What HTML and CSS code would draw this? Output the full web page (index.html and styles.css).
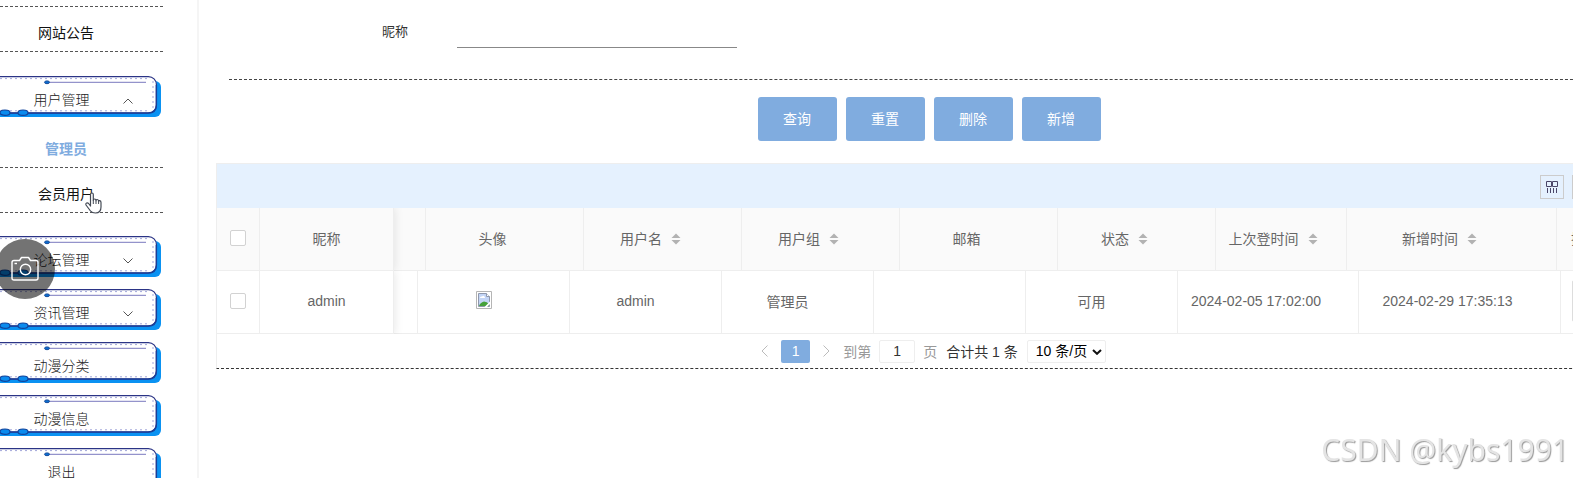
FILE: index.html
```html
<!DOCTYPE html>
<html lang="zh-CN">
<head>
  <meta charset="UTF-8">
  <meta name="viewport" content="width=device-width, initial-scale=1.0">
  <title>管理员</title>
  <link rel="stylesheet" href="styles.css">
</head>
<body>
  <svg class="defs" aria-hidden="true">
    <symbol id="frame" viewBox="0 0 161 41">
      <rect x="-12" y="5" width="173" height="36" rx="6" fill="#0a92f2"/>
      <rect x="-12" y="0.6" width="168.4" height="36.4" rx="8" fill="#fff" stroke="#2b3486" stroke-width="1.2"/>
      <path d="M0 37H148Q156.400 37 156.400 29V9" fill="none" stroke="#1c3e96" stroke-width="1.4"/>
      <path d="M0 2.600H148M0 34.800H150M153 5V33" fill="none" stroke="#a3a7da" stroke-width="1" stroke-dasharray="2 3"/>
      <path d="M47 6.300H146" stroke="#9493cb" stroke-width="1.2"/>
      <ellipse cx="47" cy="6.300" rx="2.500" ry="1.400" fill="#0a6fd0" stroke="#174b9c"/>
      <ellipse cx="5" cy="36.700" rx="5" ry="2.700" fill="#0a8bee" stroke="#11449c" stroke-width="1.2"/>
      <ellipse cx="23" cy="36.700" rx="5" ry="2.700" fill="#0a8bee" stroke="#11449c" stroke-width="1.2"/>
    </symbol>
    <symbol id="down" viewBox="0 0 10 6"><path d="M0.500 0.500L5 5L9.500 0.500" fill="none" stroke="#555"/></symbol>
    <symbol id="up" viewBox="0 0 10 6"><path d="M0.500 5.500L5 1L9.500 5.500" fill="none" stroke="#555"/></symbol>
    <symbol id="sort" viewBox="0 0 10 12"><path d="M5 0.500L9.500 5H0.500ZM5 11.500L9.500 7H0.500Z" fill="#b2b2b2"/></symbol>
  </svg>

  <nav class="sidebar">
    <ul class="submenu first">
      <li><a href="#">网站公告</a></li>
    </ul>
    <a class="menu" href="#"><svg class="frame"><use href="#frame"/></svg><span>用户管理</span><svg class="arrow"><use href="#up"/></svg></a>
    <ul class="submenu">
      <li class="active"><a href="#">管理员</a></li>
      <li><a href="#">会员用户</a></li>
    </ul>
    <a class="menu" href="#"><svg class="frame"><use href="#frame"/></svg><span>论坛管理</span><svg class="arrow"><use href="#down"/></svg></a>
    <a class="menu" href="#"><svg class="frame"><use href="#frame"/></svg><span>资讯管理</span><svg class="arrow"><use href="#down"/></svg></a>
    <a class="menu" href="#"><svg class="frame"><use href="#frame"/></svg><span>动漫分类</span></a>
    <a class="menu" href="#"><svg class="frame"><use href="#frame"/></svg><span>动漫信息</span></a>
    <a class="menu" href="#"><svg class="frame"><use href="#frame"/></svg><span>退出</span></a>
  </nav>

  <main class="main">
    <form class="search">
      <div class="field">
        <label for="nickname">昵称</label>
        <input type="text" id="nickname">
      </div>
    </form>
    <div class="buttons">
      <button type="button">查询</button>
      <button type="button">重置</button>
      <button type="button">删除</button>
      <button type="button">新增</button>
    </div>

    <section class="table-box">
      <div class="toolbar">
        <button type="button" class="tool" aria-label="筛选列">
          <svg width="12" height="12" viewBox="0 0 12 12" fill="none" stroke="#4b4668"><path d="M0.500 0.500H5.500V5.500H0.500ZM6.500 0.500H11.500V5.500H6.500ZM1.500 7V12M4.500 7V12M7.500 7V12M10.500 7V12"/></svg>
        </button>
        <button type="button" class="tool" aria-label="导出"></button>
        <button type="button" class="tool" aria-label="打印"></button>
      </div>

      <table class="head">
        <colgroup>
          <col class="c-check"><col class="c-fixed"><col class="h-gap"><col class="h-col"><col class="h-col"><col class="h-col"><col class="h-col"><col class="h-col"><col class="h-login"><col class="h-add"><col>
        </colgroup>
        <thead>
          <tr>
            <th class="check"><input type="checkbox" aria-label="全选"></th>
            <th class="fixed">昵称</th>
            <th></th>
            <th>头像</th>
            <th>用户名<svg class="sort"><use href="#sort"/></svg></th>
            <th>用户组<svg class="sort"><use href="#sort"/></svg></th>
            <th>邮箱</th>
            <th>状态<svg class="sort"><use href="#sort"/></svg></th>
            <th class="login">上次登时间<svg class="sort"><use href="#sort"/></svg></th>
            <th>新增时间<svg class="sort"><use href="#sort"/></svg></th>
            <th class="action">操作</th>
          </tr>
        </thead>
      </table>
      <table class="rows">
        <colgroup>
          <col class="c-check"><col class="c-fixed"><col class="b-gap"><col class="b-col"><col class="b-col"><col class="b-col"><col class="b-col"><col class="b-col"><col class="b-login"><col class="b-add"><col>
        </colgroup>
        <tbody>
          <tr>
            <td class="check"><input type="checkbox" aria-label="选择 admin"></td>
            <td class="fixed">admin</td>
            <td></td>
            <td>
              <svg class="avatar" width="16" height="18" viewBox="0 0 16 18" role="img" aria-label="头像">
                <path d="M0.500 0.500H15.500V17.500H0.500Z" fill="#fff" stroke="#b5b5b5"/>
                <path d="M2.500 2.500H10.500L13.500 5.500V15.500H2.500Z" fill="#c3d5f6" stroke="#8f98ad"/>
                <path d="M4 7Q4 5 6 5.500Q8 3.500 9 6.500V7Z" fill="#fff"/>
                <path d="M3 15Q4 11.500 8 10.500Q11 10.500 13 13V15Z" fill="#45a13a"/>
                <path d="M8.500 16L14 10.500V13L11 16Z" fill="#fff"/>
                <path d="M10.500 2.500V5.500H13.500" fill="#fff" stroke="#8f98ad"/>
              </svg>
            </td>
            <td>admin</td>
            <td>管理员</td>
            <td></td>
            <td>可用</td>
            <td class="time">2024-02-05 17:02:00</td>
            <td class="time">2024-02-29 17:35:13</td>
            <td class="action"><button type="button" aria-label="详情"></button></td>
          </tr>
        </tbody>
      </table>

      <div class="pager">
        <button type="button" class="step" aria-label="上一页"><svg width="7" height="12" viewBox="0 0 7 12"><path d="M6.500 0.500L1 6L6.500 11.500" fill="none" stroke="#bbb"/></svg></button>
        <button type="button" class="current">1</button>
        <button type="button" class="step" aria-label="下一页"><svg width="7" height="12" viewBox="0 0 7 12"><path d="M0.500 0.500L6 6L0.500 11.500" fill="none" stroke="#bbb"/></svg></button>
        <label class="muted" for="page">到第</label>
        <input type="text" id="page" value="1">
        <span class="muted">页</span>
        <span class="total">合计共 1 条</span>
        <span class="limit">
          <select aria-label="每页条数"><option>10 条/页</option><option>20 条/页</option></select>
          <svg width="10" height="6" viewBox="0 0 10 6"><path d="M1 1L5 4.800L9 1" fill="none" stroke="#111" stroke-width="2"/></svg>
        </span>
      </div>
    </section>
  </main>

  <button type="button" class="camera" aria-label="截图">
    <svg width="28" height="26" viewBox="0 0 28 26" fill="none" stroke="#fff" stroke-width="1.4" stroke-linejoin="round"><path d="M3 4.500H8.500L10.500 1.500H17.500L19.500 4.500H25Q27 4.500 27 6.500V22Q27 24 25 24H3Q1 24 1 22V6.500Q1 4.500 3 4.500Z"/><circle cx="14.500" cy="13.500" r="5.200"/><path d="M3.500 7.500H6"/></svg>
  </button>
  <svg class="pointer" width="17" height="22" viewBox="0 0 17 22" aria-hidden="true"><path d="M5.500 14V2.500Q5.500 1 6.900 1Q8.300 1 8.300 2.500V8.500Q8.300 7 9.600 7Q11 7 11 8.700Q11 7.500 12.300 7.500Q13.600 7.500 13.600 9.500Q13.800 8.500 14.800 8.700Q16 9 16 10.500V15Q16 21 10.500 21Q7 21 5.500 19L1 13Q0.500 11.500 1.600 11Q2.800 10.500 4 12Z" fill="#fff" stroke="#444a55" stroke-width="1.200" stroke-linejoin="round"/><path d="M8.300 8.500V12M11 8.700V12M13.600 9.500V12" stroke="#444a55" fill="none"/></svg>
  <div class="watermark">CSDN @kybs1991</div>
</body>
</html>
```

FILE: styles.css
```css
* {
  box-sizing: border-box;
}
body {
  margin: 0;
  height: 100vh;
  overflow: hidden;
  display: flex;
  background: #fff;
  color: #333;
  font-family: "Liberation Sans", "Noto Sans CJK SC", sans-serif;
  font-size: 14px;
}
button,
input,
select {
  font: inherit;
  margin: 0;
}
a {
  color: inherit;
  text-decoration: none;
}
.defs {
  position: absolute;
  width: 0;
  height: 0;
}

/* sidebar */
.sidebar {
  flex: 0 0 199px;
  padding-top: 6px;
  border-right: 2px solid #f5f5f5;
}
.submenu {
  list-style: none;
  width: 163px;
  margin: 0 0 24px;
  padding: 0;
}
.submenu.first {
  border-top: 1px dashed #555;
}
.submenu li {
  height: 45px;
  padding: 8px 31px 0 0;
  border-bottom: 1px dashed #555;
  text-align: center;
  line-height: 36px;
  color: #111;
}
.submenu a {
  display: block;
}
.submenu .active {
  color: #80acdf;
  font-weight: bold;
}
.menu {
  position: relative;
  display: block;
  width: 161px;
  height: 41px;
  margin-bottom: 12px;
  padding: 8px 38px 0 0;
  line-height: 32px;
  text-align: center;
  font-weight: 300;
  color: #222;
}
.menu + .submenu {
  margin: -6px 0 23px;
}
.menu span {
  position: relative;
}
.frame {
  position: absolute;
  left: 0;
  top: 0;
  width: 161px;
  height: 41px;
}
.arrow {
  position: absolute;
  right: 28px;
  top: 22px;
  width: 10px;
  height: 6px;
}

/* content runs past the right edge of the window */
.main {
  flex: 1 0 0;
  min-width: 0;
  margin-right: -69px;
  padding: 12px 0 0 17px;
}
.search {
  margin: 0 14px 0 13px;
  padding: 0 0 31px 153px;
  border-bottom: 1px dashed #444;
}
.field {
  display: flex;
  align-items: center;
}
.field label {
  width: 75px;
  font-size: 13px;
}
.field input {
  width: 280px;
  height: 36px;
  padding: 0 8px;
  border: 0;
  border-bottom: 1px solid #888;
  background: none;
  outline: none;
}
.buttons {
  display: flex;
  justify-content: center;
  gap: 9px;
  padding: 17px 0 22px;
}
.buttons button {
  width: 79px;
  height: 44px;
  padding: 0 0 2px;
  border: 0;
  border-radius: 3px;
  background: #80acdf;
  color: #fff;
}

/* table */
.table-box {
  border: 1px solid #eee;
  border-bottom: 1px dashed #333;
}
.toolbar {
  display: flex;
  justify-content: flex-end;
  gap: 8px;
  height: 44px;
  padding: 11px 13px 0 0;
  background: #e5f1fe;
}
.tool {
  display: flex;
  align-items: center;
  justify-content: center;
  width: 24px;
  height: 24px;
  padding: 0;
  border: 1px solid #ccc;
  background: none;
}
table {
  width: 100%;
  table-layout: fixed;
  border-collapse: separate;
  border-spacing: 0;
  color: #666;
}
th,
td {
  height: 63px;
  padding: 0 20px 2px 0;
  border-right: 1px solid #eee;
  border-bottom: 1px solid #eee;
  font-weight: normal;
  text-align: center;
  white-space: nowrap;
}
th {
  padding-right: 24px;
  background: #fafafa;
}
.login {
  padding-right: 16px;
}
.time {
  padding-right: 24px;
}
.check,
.fixed {
  padding: 0 0 2px;
}
.fixed {
  position: relative;
  box-shadow: 2px 0 8px rgba(0, 0, 0, 0.08);
  clip-path: inset(0 -12px 0 0);
}
.c-check { width: 43px; }
.c-fixed { width: 134px; }
.h-gap { width: 32px; }
.h-col { width: 158px; }
.h-login { width: 131px; }
.h-add { width: 210px; }
.b-gap { width: 24px; }
.b-col { width: 152px; }
.b-login { width: 181px; }
.b-add { width: 202px; }
.check input {
  appearance: none;
  display: block;
  width: 16px;
  height: 16px;
  margin: 0 auto;
  border: 1px solid #d2d2d2;
  border-radius: 2px;
  background: #fff;
}
.sort {
  width: 10px;
  height: 12px;
  margin-left: 9px;
  vertical-align: -1px;
}
.action {
  padding: 0 0 2px 14px;
  text-align: left;
}
td.action {
  padding-left: 11px;
}
.action button {
  width: 60px;
  height: 42px;
  border: 1px solid #ddd;
  border-radius: 2px;
  background: #fff;
}

/* pagination */
.pager {
  display: flex;
  align-items: center;
  justify-content: center;
  height: 34px;
  padding-right: 4px;
}
.pager button {
  padding: 0;
  border: 0;
  background: none;
}
.pager .step {
  display: flex;
  justify-content: center;
  width: 33px;
}
.pager .current {
  width: 29px;
  height: 23px;
  border-radius: 2px;
  background: #80acdf;
  color: #fff;
}
.muted {
  color: #999;
}
.pager input {
  width: 36px;
  height: 23px;
  margin: 0 8px;
  padding: 0;
  border: 1px solid #eee;
  border-radius: 2px;
  text-align: center;
  color: #333;
}
.total {
  margin: 0 9px;
}
.limit {
  position: relative;
  display: flex;
}
.limit select {
  appearance: none;
  width: 79px;
  height: 23px;
  padding: 0 0 0 8px;
  border: 1px solid #eee;
  border-radius: 2px;
  background: #fff;
  color: #000;
}
.limit svg {
  position: absolute;
  right: 4px;
  top: 9px;
}

/* floating things */
.camera {
  position: fixed;
  left: -5px;
  top: 239px;
  width: 60px;
  height: 60px;
  padding: 0;
  border: 0;
  border-radius: 50%;
  background: rgba(0, 0, 0, 0.55);
}
.camera svg {
  display: block;
  margin: 0 auto;
}
.pointer {
  position: fixed;
  left: 85px;
  top: 192px;
}
.watermark {
  position: fixed;
  right: 4px;
  bottom: 8px;
  font-family: "Noto Sans", "Open Sans", sans-serif;
  font-size: 30px;
  line-height: 40px;
  color: #e4e4e4;
  text-shadow: 1px 1px 1px #999;
}
```
